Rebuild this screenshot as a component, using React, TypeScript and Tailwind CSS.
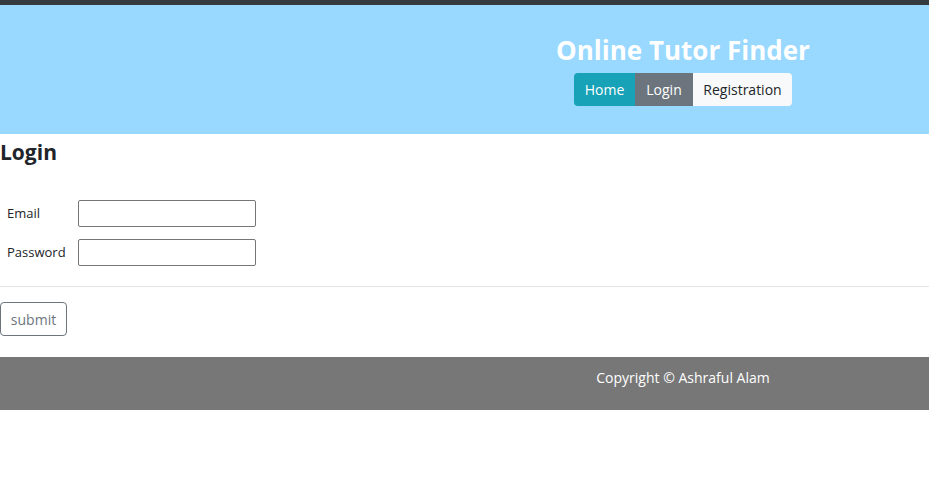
export default function App() {
  return (
    <div className="min-h-[486px] bg-white text-[#212529] font-['Open_Sans',_'Noto_Sans',_sans-serif]">
      <div className="h-[5px] bg-[#343a40]" />

      {/* header */}
      <header className="bg-[#99d8ff] pt-[28px] pb-[28px] pl-[437px]">
        <div className="flex flex-col items-center">
          <h1 className="text-[26px] leading-[34px] font-bold text-white">Online Tutor Finder</h1>
          <nav className="mt-[6px] flex text-[14px] leading-[21px]">
            <a className="w-[61px] py-[6px] text-center bg-[#17a2b8] text-white rounded-l-[4px]">Home</a>
            <a className="w-[58px] py-[6px] text-center bg-[#6c757d] text-white">Login</a>
            <a className="w-[99px] py-[6px] text-center bg-[#f8f9fa] text-[#212529] rounded-r-[4px]">
              Registration
            </a>
          </nav>
        </div>
      </header>

      {/* login form */}
      <main>
        <h4 className="mt-[5px] text-[21px] leading-[26px] font-bold">Login</h4>
        <div className="mt-[35px] flex flex-col gap-[12px] text-[13px]">
          <div className="flex items-center">
            <label className="w-[78px] pl-[7px] pt-[1px]">Email</label>
            <input className="w-[178px] h-[27px] border border-[#767676] rounded-[2px] px-1" />
          </div>
          <div className="flex items-center">
            <label className="w-[78px] pl-[7px] pt-[1px]">Password</label>
            <input type="password" className="w-[178px] h-[27px] border border-[#767676] rounded-[2px] px-1" />
          </div>
        </div>
        <hr className="mt-[20px] border-t border-[#e5e5e5]" />
        <button className="mt-[15px] h-[34px] w-[67px] border border-[#6c757d] rounded-[4px] text-[14px] text-[#6c757d]">
          submit
        </button>
      </main>

      {/* footer */}
      <footer className="mt-[21px] h-[53px] bg-[#777777] pt-[10px] pl-[437px]">
        <p className="text-center text-[14px] leading-[21px] text-white">Copyright © Ashraful Alam</p>
      </footer>
    </div>
  );
}
